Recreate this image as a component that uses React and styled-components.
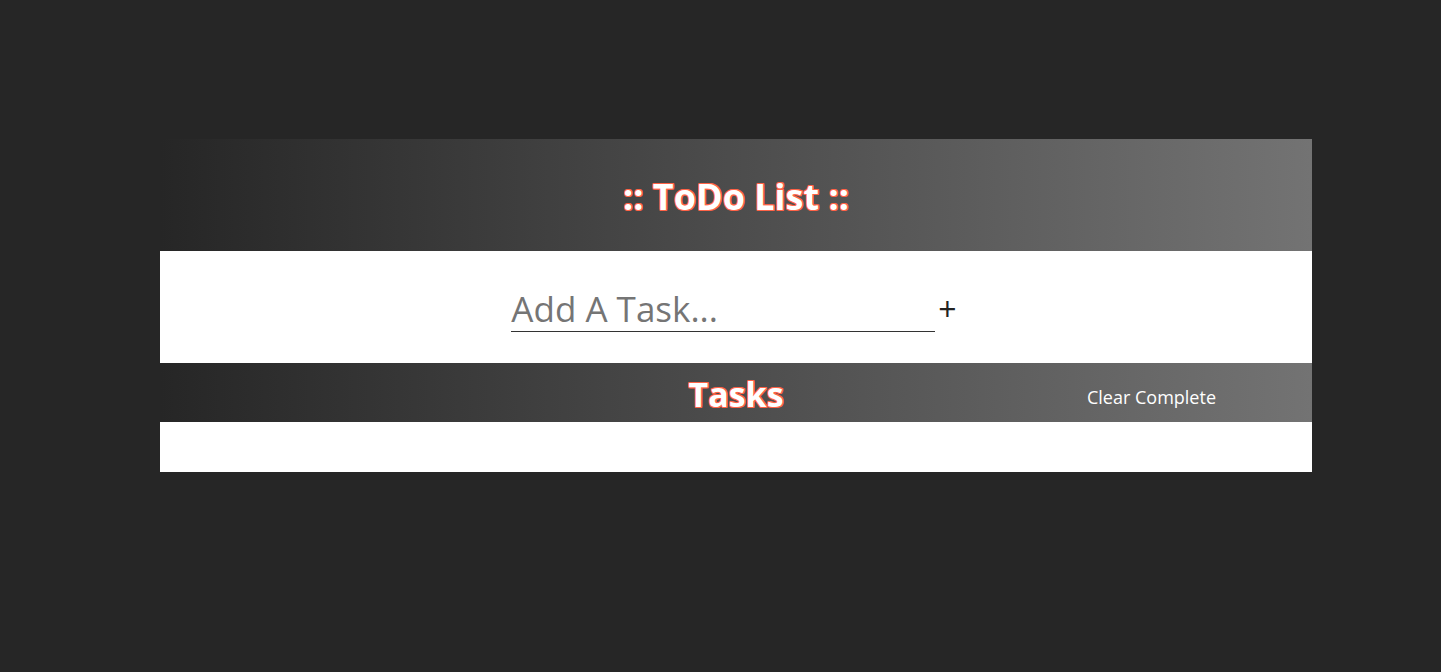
import React from "react";
import styled, { createGlobalStyle } from "styled-components";

const Global = createGlobalStyle`
  html, body { margin: 0; padding: 0; background: #262626; }
  body { font-family: "Open Sans", "Noto Sans", sans-serif; }
`;

const Page = styled.div`
  min-height: 672px;
  padding: 139px 0 0 160px;
  box-sizing: border-box;
`;

const Card = styled.div`
  width: 1152px;
  display: flex;
  flex-direction: column;
`;

const Bar = styled.div`
  background: linear-gradient(to right, #262626, #737373);
  height: ${(p) => p.$h}px;
  display: grid;
  grid-template-columns: 1fr auto 1fr;
  align-items: center;
`;

const Outlined = styled.h1`
  grid-column: 2;
  margin: 0;
  color: #fff;
  font-family: "Open Sans", "Noto Sans", sans-serif;
  font-weight: 700;
  font-size: ${(p) => p.$size}px;
  line-height: 1.2;
  text-shadow: 1px 1px 0 #ff6347, -1px -1px 0 #ff6347, 1px -1px 0 #ff6347,
    -1px 1px 0 #ff6347, 0 1px 0 #ff6347, 0 -1px 0 #ff6347, 1px 0 0 #ff6347,
    -1px 0 0 #ff6347;
  transform: translate(${(p) => p.$dx || 0}px, ${(p) => p.$dy || 0}px);
`;

const ClearButton = styled.button`
  grid-column: 3;
  justify-self: end;
  margin-right: 96px;
  background: none;
  border: none;
  padding: 0;
  color: #fff;
  font-family: "Open Sans", "Noto Sans", sans-serif;
  font-size: 18px;
  cursor: pointer;
  transform: translateY(4px);
`;

const InputSection = styled.div`
  background: #fff;
  height: 112px;
  display: flex;
  align-items: center;
  justify-content: center;
  gap: 3px;
  padding-right: 4px;
  box-sizing: border-box;
`;

const TaskInput = styled.input`
  width: 424px;
  border: none;
  border-bottom: 1px solid #333;
  outline: none;
  font-family: "Open Sans", "Noto Sans", sans-serif;
  font-size: 35px;
  padding: 3px 0 0 0;
  height: 50px;
  box-sizing: border-box;
  color: #222;
  background: transparent;
  &::placeholder { color: #757575; }
`;

const AddButton = styled.button`
  background: none;
  border: none;
  padding: 0;
  font-family: "Open Sans", "Noto Sans", sans-serif;
  font-size: 32px;
  color: #222;
  line-height: 1;
  cursor: pointer;
  margin-top: 4px;
`;

const List = styled.ul`
  background: #fff;
  height: 50px;
  margin: 0;
  padding: 0;
  list-style: none;
`;

export default function App() {
  return (
    <>
      <Global />
      <Page>
        <Card>
          <Bar $h={112}>
            <Outlined $size={36} $dy={2}>:: ToDo List ::</Outlined>
          </Bar>
          <InputSection>
            <TaskInput placeholder="Add A Task..." />
            <AddButton>+</AddButton>
          </InputSection>
          <Bar $h={59}>
            <Outlined $size={34} $dy={2}>Tasks</Outlined>
            <ClearButton>Clear Complete</ClearButton>
          </Bar>
          <List />
        </Card>
      </Page>
    </>
  );
}
